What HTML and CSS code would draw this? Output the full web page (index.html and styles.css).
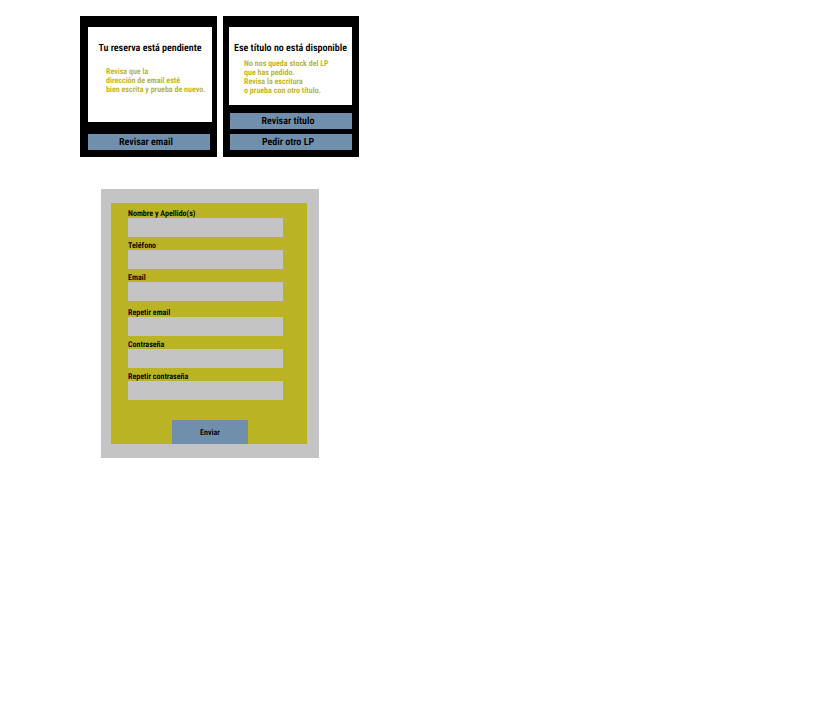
FILE: index.html
```html
<!DOCTYPE html>
<html lang="es">
<head>
    <meta charset="UTF-8">
    <meta name="viewport" content="width=device-width, initial-scale=1.0">
    <title>Reserva de LP</title>
    <link rel="stylesheet" href="styles.css">
</head>
<body>
    <main>
        <!-- Avisos -->
        <div class="cards">
            <section class="card card-email">
                <div class="panel">
                    <h2>Tu reserva está pendiente</h2>
                    <p>Revisa que la<br>dirección de email esté<br>bien escrita y prueba de nuevo.</p>
                </div>
                <button type="button">Revisar email</button>
            </section>

            <section class="card card-stock">
                <div class="panel">
                    <h2>Ese título no está disponible</h2>
                    <p>No nos queda stock del LP<br>que has pedido.<br>Revisa la escritura<br>o prueba con otro título.</p>
                </div>
                <button type="button">Revisar título</button>
                <button type="button">Pedir otro LP</button>
            </section>
        </div>

        <!-- Formulario de registro -->
        <section class="form-frame">
            <form class="form">
                <div class="field">
                    <label for="nombre">Nombre y Apellido(s)</label>
                    <input type="text" id="nombre" name="nombre">
                </div>
                <div class="field">
                    <label for="telefono">Teléfono</label>
                    <input type="tel" id="telefono" name="telefono">
                </div>
                <div class="field">
                    <label for="email">Email</label>
                    <input type="email" id="email" name="email">
                </div>
                <div class="field field-group">
                    <label for="email2">Repetir email</label>
                    <input type="email" id="email2" name="email2">
                </div>
                <div class="field">
                    <label for="clave">Contraseña</label>
                    <input type="password" id="clave" name="clave">
                </div>
                <div class="field">
                    <label for="clave2">Repetir contraseña</label>
                    <input type="password" id="clave2" name="clave2">
                </div>
                <button type="submit">Enviar</button>
            </form>
        </section>
    </main>
</body>
</html>
```
FILE: styles.css
```css
* {
    box-sizing: border-box;
}

body, h2, p {
    margin: 0;
    padding: 0;
}

body {
    background-color: #fff;
    color: #000;
    font-family: "Roboto Condensed", "Liberation Sans Narrow", Roboto, sans-serif;
    font-weight: 600;
    text-rendering: geometricPrecision;
}

main {
    padding: 16px 16px 16px 80px;
}

button, input {
    font-family: inherit;
    font-weight: 600;
    text-rendering: inherit;
    border: none;
    border-radius: 0;
}

button {
    background-color: #6f8fad;
    color: #000;
    cursor: pointer;
}

/* Cards */
.cards {
    display: grid;
    grid-template-columns: 137fr 136fr;
    gap: 6px;
    max-width: 279px;
}

.card {
    display: flex;
    flex-direction: column;
    gap: 5px;
    background-color: #000;
    padding: 11px 7px 7px;
}

.card-email {
    padding-left: 8px;
    padding-right: 5px;
}

.card-stock {
    padding-left: 6px;
}

.panel {
    flex: 1;
    background-color: #fff;
    padding-top: 16px;
    margin-bottom: 3px;
    white-space: nowrap;
}

.card-email .panel {
    margin-bottom: 7px;
}

.card h2 {
    font-size: 10px;
    font-weight: 600;
    line-height: 12px;
    text-align: center;
}

.card p {
    color: #bab323;
    font-size: 8px;
    line-height: 9px;
    padding: 4px 0 10px 15px;
}

.card-email p {
    padding: 12px 0 0 18px;
}

.card button {
    height: 16px;
    padding: 1px 6px 0 0;
    font-size: 10px;
    line-height: 15px;
}

.card-email button {
    margin-right: 2px;
}

.card-stock button {
    margin-left: 1px;
}

/* Form */
.form-frame {
    max-width: 218px;
    margin: 32px 0 0 21px;
    padding: 14px 12px 14px 10px;
    background-color: #c4c4c4;
}

.form {
    display: flex;
    flex-direction: column;
    gap: 4px;
    padding: 6px 24px 0 17px;
    background-color: #bab323;
}

.field {
    display: flex;
    flex-direction: column;
}

.field-group {
    margin-top: 3px;
}

.field label {
    font-size: 8px;
    line-height: 9px;
}

.field input {
    width: 100%;
    height: 19px;
    padding: 0 4px;
    background-color: #c4c4c4;
    font-size: 10px;
}

.form button {
    align-self: center;
    width: 76px;
    height: 24px;
    margin: 16px 0 0 9px;
    padding: 0;
    font-size: 8px;
}
```
